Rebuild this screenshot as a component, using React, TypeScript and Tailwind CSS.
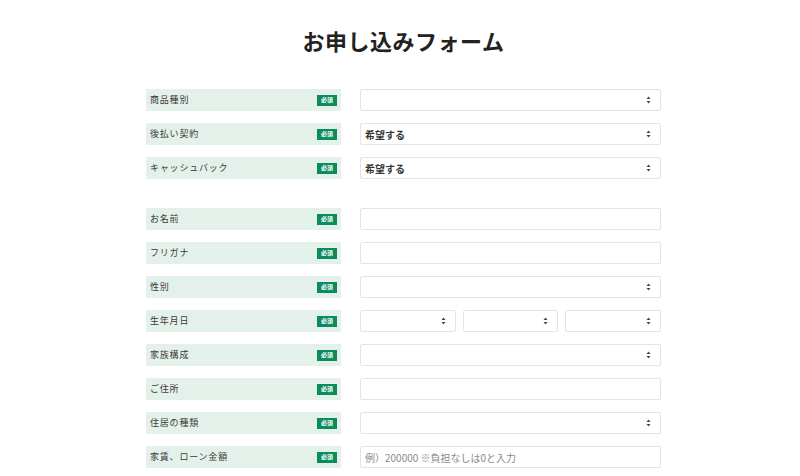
import React from "react";

type Row = {
  label: string;
  kind: "select" | "input" | "date";
  value?: string;
  placeholder?: string;
  gapBefore?: boolean;
};

const rows: Row[] = [
  { label: "商品種別", kind: "select" },
  { label: "後払い契約", kind: "select", value: "希望する" },
  { label: "キャッシュバック", kind: "select", value: "希望する" },
  { label: "お名前", kind: "input", gapBefore: true },
  { label: "フリガナ", kind: "input" },
  { label: "性別", kind: "select" },
  { label: "生年月日", kind: "date" },
  { label: "家族構成", kind: "select" },
  { label: "ご住所", kind: "input" },
  { label: "住居の種類", kind: "select" },
  {
    label: "家賃、ローン金額",
    kind: "input",
    placeholder: "例）200000 ※負担なしは0と入力",
  },
];

const Arrows = () => (
  <svg width="5" height="8" viewBox="0 0 5 8" className="shrink-0">
    <path d="M2.5 0.5 L4.5 3 L0.5 3 Z" fill="#444" />
    <path d="M2.5 7.5 L4.5 5 L0.5 5 Z" fill="#444" />
  </svg>
);

const SelectBox = ({ value, className = "" }: { value?: string; className?: string }) => (
  <div
    className={`flex h-[22px] items-center justify-between rounded-[2px] border border-[#e4e4e4] bg-white pl-[4px] pr-[9px] ${className}`}
  >
    <span className="text-[10px] font-semibold text-[#333]">{value}</span>
    <Arrows />
  </div>
);

const InputBox = ({ placeholder }: { placeholder?: string }) => (
  <div className="flex h-[22px] flex-1 items-center rounded-[2px] border border-[#e4e4e4] bg-white px-[4px]">
    <span className="text-[10px] text-[#8a8a8a]">{placeholder}</span>
  </div>
);

export default function App() {
  return (
    <div
      className="min-h-[476px] bg-white"
      style={{ fontFamily: '"Noto Sans CJK JP", "Noto Sans", sans-serif' }}
    >
      <div className="mx-auto w-[530px] pl-[11px] pr-[4px] pt-[24px]">
        <h1 className="text-center text-[22px] font-bold leading-[32px] tracking-[0.5px] text-[#222]">
          お申し込みフォーム
        </h1>

        <div className="mt-[33px] flex flex-col">
          {rows.map((row, i) => (
            <div
              key={i}
              className={`flex items-center gap-[19px] ${
                i === 0 ? "" : row.gapBefore ? "mt-[29px]" : "mt-[12px]"
              }`}
            >
              <div className="flex h-[22px] w-[195px] shrink-0 items-center justify-between bg-[#e4f1ea] pl-[4px] pr-[4px]">
                <span className="text-[9px] tracking-[0.8px] text-[#3a3a3a]">{row.label}</span>
                <span className="flex h-[11px] w-[20px] items-center justify-center bg-[#0b8a5c] text-[6px] font-bold leading-none text-white">
                  必須
                </span>
              </div>

              {row.kind === "select" && <SelectBox value={row.value} className="flex-1" />}
              {row.kind === "input" && <InputBox placeholder={row.placeholder} />}
              {row.kind === "date" && (
                <div className="flex flex-1 gap-[7px]">
                  <SelectBox className="flex-1" />
                  <SelectBox className="flex-1" />
                  <SelectBox className="flex-1" />
                </div>
              )}
            </div>
          ))}
        </div>
      </div>
    </div>
  );
}
